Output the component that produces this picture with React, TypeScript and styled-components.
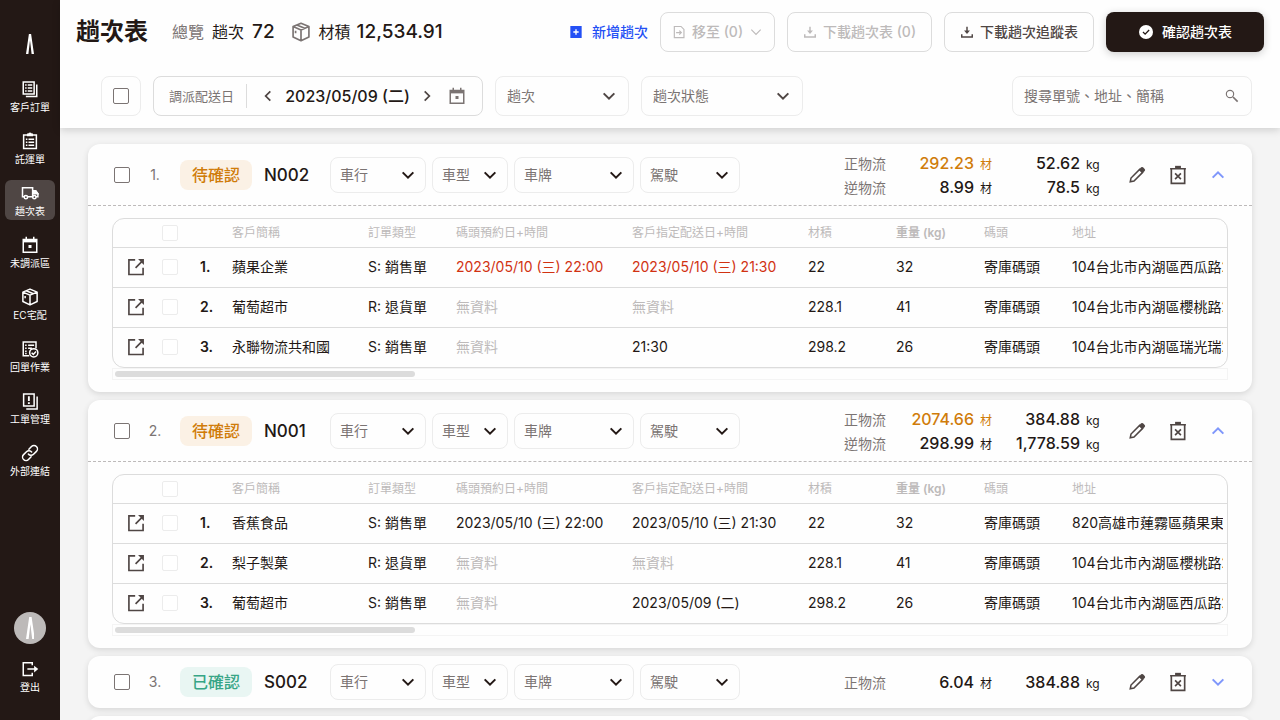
import React from "react";
import styled, { createGlobalStyle, css } from "styled-components";

const c = {
  ink: "#231815",
  soft: "#4f4644",
  grey: "#7b7473",
  light: "#bdbaba",
  line: "#dcdcdc",
  faint: "#ececec",
  blue: "#2450f5",
  amber: "#d07c0a",
  red: "#d13212",
};

const Global = createGlobalStyle`
  *, *::before, *::after { box-sizing: border-box; }
  body {
    margin: 0;
    background: #f4f4f4;
    color: ${c.ink};
    font-family: Inter, "Noto Sans CJK TC", sans-serif;
    font-size: 14px;
    line-height: 20px;
  }
  button, input, select { font: inherit; color: inherit; margin: 0; }
  button { padding: 0; border: 0; background: none; cursor: pointer; }
  svg { display: block; flex: none; }
`;

/* ---------- icons ---------- */

const Svg = styled.svg.attrs({ viewBox: "0 0 24 24", fill: "none", stroke: "currentColor", "aria-hidden": true })<{ $size?: number; $weight?: number }>`
  width: ${(p) => p.$size ?? 18}px;
  height: ${(p) => p.$size ?? 18}px;
  stroke-width: ${(p) => p.$weight ?? 2};
`;

const LogoMark = styled.svg.attrs({ viewBox: "0 0 8 20", fill: "currentColor", "aria-hidden": true })<{ $h: number }>`
  height: ${(p) => p.$h}px;
  width: ${(p) => p.$h * 0.4}px;
`;
const Logo = ({ h }: { h: number }) => (
  <LogoMark $h={h}>
    <path d="M2.900 0h2.200L8 20H5.600L4 6.500 2.400 20H0z" />
  </LogoMark>
);

const OrdersIcon = () => (
  <Svg>
    <path d="M3 2.500h14.500v16H3zM21 6v16H6.500" />
    <path d="M5.500 6.500h2M9 6.500h6M5.500 10.500h2M9 10.500h6M5.500 14.500h2M9 14.500h6" />
  </Svg>
);
const ClipboardIcon = () => (
  <Svg>
    <path d="M3.500 4h17v18h-17z" />
    <path d="M9 4.500V3h1.500a1.500 1.500 0 0 1 3 0H15v1.500z" fill="currentColor" />
    <path d="M6.500 9.500h2M10 9.500h7.500M6.500 13.500h2M10 13.500h7.500M6.500 17.500h2M10 17.500h7.500" />
  </Svg>
);
const TruckIcon = () => (
  <Svg>
    <path d="M4.500 17H2V5h13.500v12H9M15.500 9h4L22.500 13v4H20" />
    <path d="M16 9h3.500l3 4H16z" fill="currentColor" />
    <circle cx="6.500" cy="17.500" r="2.200" />
    <circle cx="17.800" cy="17.500" r="2.200" />
  </Svg>
);
const CalendarIcon = () => (
  <Svg>
    <path d="M3 4.500h18V21.500H3z" />
    <path d="M3 4.500h18v4H3z" fill="currentColor" stroke="none" />
    <path d="M7 1v3M17 1v3" />
    <path d="M10 12h4v4h-4z" fill="currentColor" stroke="none" />
  </Svg>
);
const BoxIcon = ({ size, weight }: { size?: number; weight?: number }) => (
  <Svg $size={size} $weight={weight} strokeLinejoin="round">
    <path d="M12 1.500 21.500 5.500v12.500L12 22.500 2.500 18V5.500zM2.500 5.500 12 9.500l9.500-4M12 9.500v13M7 3.600l9.500 4" />
    <path d="M5.500 10.500v3" />
  </Svg>
);
const ReceiptIcon = () => (
  <Svg>
    <path d="M20 11V2.500H3V21h8" />
    <path d="M5.500 7h2M9.500 7h8M5.500 11h2M9.500 11h5M5.500 15h2M5.500 18h2" />
    <circle cx="17" cy="17" r="5.500" />
    <path d="m14.200 17 2.200 2.200 3.600-4" />
  </Svg>
);
const IssueIcon = () => (
  <Svg>
    <path d="M3.500 2.500h14v16h-14zM21.500 6v16.500H7" />
    <path d="M10.500 5.500V12M10.500 13.500v2.500" strokeWidth="2.500" />
  </Svg>
);
const LinkIcon = () => (
  <Svg strokeLinecap="round">
    <path d="m10.500 7 3.500-3.700a4.600 4.600 0 0 1 6.600 6.500l-3.900 4a4.600 4.600 0 0 1-6.900-.5" />
    <path d="m13.500 17-3.500 3.700a4.600 4.600 0 0 1-6.600-6.500l3.900-4a4.600 4.600 0 0 1 6.900.5" />
  </Svg>
);
const LogoutIcon = () => (
  <Svg>
    <path d="M15 7V3.500H3v17h12V17M8.500 12H19" />
    <path d="M17.500 7.500 23 12l-5.500 4.500z" fill="currentColor" stroke="none" />
  </Svg>
);
const PlusSquare = () => (
  <Svg $size={16}>
    <path d="M3.500 3h17v18h-17z" fill="currentColor" stroke="none" />
    <path d="M12 8v8M8 12h8" stroke="#fff" />
  </Svg>
);
const MoveIcon = () => (
  <Svg $size={14}>
    <path d="M4 2.500h11.500L20.500 7.500v14H4zM7 13h8.500M12.500 9.500 16 13l-3.500 3.500" />
  </Svg>
);
const DownloadIcon = () => (
  <Svg $size={14}>
    <path d="M3 16v4.500h18V16M12 3v9" strokeWidth="2.500" />
    <path d="M7 9.500h10L12 15.500z" fill="currentColor" stroke="none" />
  </Svg>
);
const CheckCircle = () => (
  <Svg $size={16}>
    <circle cx="12" cy="12" r="10.500" fill="#fff" stroke="none" />
    <path d="m7.500 12 3.200 3.200 6-6.200" stroke={c.ink} />
  </Svg>
);
const SearchIcon = () => (
  <Svg $size={16}>
    <circle cx="9" cy="9" r="5.500" strokeWidth="1.700" />
    <path d="m13.500 13.500 7 7" strokeWidth="2.500" />
  </Svg>
);
const Chevron = ({ dir, size = 16, weight = 3 }: { dir: "up" | "down" | "left" | "right"; size?: number; weight?: number }) => {
  const d = { up: "m4 16 8-8 8 8", down: "m4 8 8 8 8-8", left: "m16 4-8 8 8 8", right: "m8 4 8 8-8 8" }[dir];
  return (
    <Svg $size={size} $weight={weight}>
      <path d={d} />
    </Svg>
  );
};
const PencilIcon = () => (
  <Svg>
    <path d="m3 21 1-5L15.500 4.500l4 4L8 20z" />
    <path d="m14.500 5 3-3.200a2 2 0 0 1 2.500 0l2.300 2.300a2 2 0 0 1 0 2.500L19 9.500z" fill="currentColor" stroke="none" />
  </Svg>
);
const TrashIcon = () => (
  <Svg $size={20}>
    <path d="M4 4.500h16v17.500H4zM2.500 4.500h19M8.500 10l7 7M15.500 10l-7 7" />
    <path d="M8.500 1h7v3h-7z" fill="currentColor" stroke="none" />
  </Svg>
);
const OpenIcon = () => (
  <Svg $size={20}>
    <path d="M11 3.500H3.500v17.500h17V13M11.500 13l8-8" />
    <path d="M14.500 2.500h7v7z" fill="currentColor" stroke="none" />
  </Svg>
);

/* ---------- shell ---------- */

const Shell = styled.div`
  display: flex;
  height: 100vh;
`;
const Sidebar = styled.aside`
  display: flex;
  flex-direction: column;
  align-items: center;
  flex: none;
  width: 60px;
  padding: 34px 0 24px;
  background: ${c.ink};
  color: #fff;
`;
const Nav = styled.nav`
  display: flex;
  flex-direction: column;
  gap: 12px;
  margin-top: 22px;
`;
const navItem = css`
  display: flex;
  flex-direction: column;
  align-items: center;
  justify-content: flex-end;
  gap: 2px;
  width: 50px;
  height: 40px;
  padding-bottom: 2px;
  border-radius: 6px;
  color: #fff;
  font-size: 10px;
  line-height: 14px;
  white-space: nowrap;
  text-decoration: none;
`;
const NavLink = styled.a<{ $active?: boolean }>`
  ${navItem}
  background: ${(p) => (p.$active ? "#4f4644" : "transparent")};
`;
const LogoutButton = styled.button`
  ${navItem}
`;
const Avatar = styled.div`
  display: flex;
  align-items: center;
  justify-content: center;
  width: 32px;
  height: 32px;
  margin: auto 0 12px;
  border-radius: 50%;
  background: #bdbab9;
`;
const Main = styled.main`
  display: flex;
  flex-direction: column;
  flex: 1;
  min-width: 0;
`;

/* ---------- header ---------- */

const Header = styled.header`
  position: relative;
  z-index: 1;
  flex: none;
  background: #fefefe;
  box-shadow: 0 2px 8px rgba(0, 0, 0, 0.16);
`;
const TopBar = styled.div`
  display: flex;
  align-items: center;
  justify-content: space-between;
  height: 64px;
  padding: 0 16px;
`;
const Summary = styled.div`
  display: flex;
  align-items: center;
  gap: 24px;
  font-size: 16px;
  line-height: 24px;
  white-space: nowrap;
`;
const Title = styled.h1`
  margin: 0;
  font-size: 24px;
  font-weight: 600;
  line-height: 32px;
`;
const Stats = styled.div`
  display: flex;
  align-items: center;
  gap: 16px;
`;
const Stat = styled.div<{ $gap: number }>`
  display: flex;
  align-items: center;
  gap: ${(p) => p.$gap}px;
`;
const Muted = styled.span`
  display: flex;
  color: ${c.grey};
`;
const Total = styled.strong`
  font-size: 19px;
  font-weight: 500;
`;
const Actions = styled.div`
  display: flex;
  align-items: center;
  gap: 12px;
  font-weight: 500;
`;
const Button = styled.button<{ $kind?: "link" | "solid"; $w?: number }>`
  display: flex;
  align-items: center;
  justify-content: center;
  gap: ${(p) => (p.$kind ? 8 : 6)}px;
  height: 40px;
  width: ${(p) => (p.$w ? `${p.$w}px` : "auto")};
  font-weight: 500;
  white-space: nowrap;
  border: 1px solid ${c.line};
  border-radius: 8px;
  color: ${c.soft};
  &:disabled { color: ${c.light}; }
  ${(p) => p.$kind === "link" && css`border: 0; color: ${c.blue};`}
  ${(p) => p.$kind === "solid" && css`
    border: 0;
    background: ${c.ink};
    color: #fff;
    box-shadow: 0 2px 8px rgba(0, 0, 0, 0.2);
  `}
`;
const FilterBar = styled.div`
  display: flex;
  align-items: center;
  gap: 12px;
  height: 64px;
  padding: 0 28px 0 41px;
`;
const Check = styled.input.attrs({ type: "checkbox" })<{ $pale?: boolean }>`
  appearance: none;
  display: block;
  flex: none;
  width: 16px;
  height: 16px;
  border: 1px solid ${(p) => (p.$pale ? c.faint : c.grey)};
  border-radius: 2px;
  background: #fff;
  &:checked { background: ${c.blue}; }
`;
const CheckFrame = styled.label`
  display: flex;
  align-items: center;
  justify-content: center;
  width: 40px;
  height: 40px;
  border: 1px solid ${c.faint};
  border-radius: 8px;
`;
const DateBox = styled.div`
  display: flex;
  align-items: center;
  justify-content: space-between;
  width: 330px;
  height: 40px;
  padding: 0 16px 0 15px;
  border: 1px solid ${c.line};
  border-radius: 8px;
  white-space: nowrap;
`;
const DateLabel = styled.span`
  padding-right: 12px;
  border-right: 1px solid ${c.line};
  color: ${c.grey};
  font-size: 13px;
  line-height: 24px;
`;
const Stepper = styled.div`
  display: flex;
  align-items: center;
  gap: 10px;
`;
const DateValue = styled.span`
  font-size: 16px;
  font-weight: 500;
`;
const IconButton = styled.button<{ $tone?: string }>`
  display: flex;
  align-items: center;
  justify-content: center;
  color: ${(p) => p.$tone ?? c.soft};
`;
const SelectFrame = styled.div<{ $w: number; $tall?: boolean }>`
  display: grid;
  align-items: center;
  flex: none;
  width: ${(p) => p.$w}px;
  height: ${(p) => (p.$tall ? 40 : 36)}px;
  color: ${(p) => (p.$tall ? c.soft : c.ink)};
  & > * { grid-area: 1 / 1; }
  & > svg {
    justify-self: end;
    margin-right: ${(p) => (p.$tall ? 12 : 10)}px;
    pointer-events: none;
  }
`;
const SelectControl = styled.select<{ $tall?: boolean }>`
  appearance: none;
  width: 100%;
  height: 100%;
  padding: 0 28px 0 ${(p) => (p.$tall ? 11 : 9)}px;
  border: 1px solid ${c.faint};
  border-radius: 8px;
  background: transparent;
  color: ${c.grey};
`;
const Select = ({ label, w, tall }: { label: string; w: number; tall?: boolean }) => (
  <SelectFrame $w={w} $tall={tall}>
    <SelectControl aria-label={label} $tall={tall}>
      <option>{label}</option>
    </SelectControl>
    <Chevron dir="down" />
  </SelectFrame>
);
const Search = styled.label`
  display: flex;
  align-items: center;
  width: 240px;
  height: 40px;
  margin-left: auto;
  padding: 0 11px;
  border: 1px solid ${c.faint};
  border-radius: 8px;
  color: ${c.grey};
`;
const SearchInput = styled.input`
  flex: 1;
  min-width: 0;
  padding: 0;
  border: 0;
  outline: 0;
  background: none;
  &::placeholder { color: ${c.grey}; opacity: 1; }
`;

/* ---------- trip cards ---------- */

const List = styled.div`
  display: flex;
  flex-direction: column;
  gap: 8px;
  flex: 1;
  min-height: 0;
  padding: 16px 28px 0;
  overflow: hidden auto;
  scrollbar-width: none;
`;
const Card = styled.section`
  flex: none;
  min-height: 52px;
  border-radius: 12px;
  background: #fefefe;
  box-shadow: 0 2px 6px rgba(0, 0, 0, 0.12);
`;
const CardHead = styled.div<{ $open: boolean }>`
  display: flex;
  align-items: center;
  height: ${(p) => (p.$open ? 62 : 52)}px;
  padding: 0 26px;
  border-bottom: ${(p) => (p.$open ? `1px dashed ${c.light}` : "0")};
`;
const Index = styled.span`
  width: 50px;
  text-align: center;
  color: ${c.grey};
`;
const Badge = styled.span<{ $done?: boolean }>`
  flex: none;
  width: 72px;
  border-radius: 8px;
  background: ${(p) => (p.$done ? "#e9f6f3" : "#fbf1e5")};
  color: ${(p) => (p.$done ? "#37a586" : c.amber)};
  font-size: 16px;
  font-weight: 500;
  line-height: 30px;
  text-align: center;
`;
const TripName = styled.h2`
  width: 66px;
  margin: 0 0 0 12px;
  font-size: 17px;
  font-weight: 500;
  line-height: 24px;
`;
const Selects = styled.div`
  display: flex;
  gap: 6px;
`;
const Flows = styled.dl`
  display: grid;
  gap: 0;
  margin: 0 0 0 auto;
`;
const Flow = styled.div`
  display: grid;
  grid-template-columns: 42px 82px 12px 82px 14px;
  column-gap: 6px;
  align-items: baseline;
  height: 24px;
  line-height: 24px;
`;
const FlowLabel = styled.dt`
  color: ${c.grey};
  white-space: nowrap;
`;
const Amount = styled.dd<{ $warn?: boolean }>`
  margin: 0;
  text-align: right;
  font-size: 16px;
  font-weight: 500;
  color: ${(p) => (p.$warn ? c.amber : c.ink)};
`;
const Unit = styled.dd<{ $warn?: boolean }>`
  margin: 0;
  font-size: 12px;
  color: ${(p) => (p.$warn ? c.amber : c.ink)};
`;
const Tools = styled.div`
  display: flex;
  align-items: center;
  gap: 22px;
  margin-left: 28px;
`;
const Body = styled.div`
  padding: 12px 24px;
`;
const TableFrame = styled.div`
  overflow: hidden;
  border: 1px solid ${c.line};
  border-radius: 12px;
`;
const Table = styled.table`
  width: 100%;
  table-layout: fixed;
  border-collapse: collapse;
  text-align: left;
`;
const Col = styled.col<{ $w?: number }>`
  width: ${(p) => (p.$w ? `${p.$w}px` : "auto")};
`;
const Th = styled.th<{ $strong?: boolean }>`
  height: 28px;
  padding: 0;
  color: ${c.light};
  font-size: 12px;
  font-weight: ${(p) => (p.$strong ? 600 : 400)};
  line-height: 16px;
  white-space: nowrap;
`;
const Td = styled.td<{ $tone?: "red" | "light"; $strong?: boolean }>`
  height: 40px;
  padding: 0;
  border-top: 1px solid ${c.line};
  color: ${(p) => (p.$tone ? c[p.$tone] : c.ink)};
  font-weight: ${(p) => (p.$strong ? 600 : 400)};
  white-space: nowrap;
`;
const OpenCell = styled(Td)`
  padding-left: 13px;
`;
const Clip = styled.div`
  margin-right: 4px;
  overflow: hidden;
`;
const ScrollTrack = styled.div`
  height: 12px;
  padding: 2px;
  border: 1px solid #f4f4f4;
`;
const ScrollThumb = styled.div`
  width: 300px;
  height: 6px;
  border-radius: 3px;
  background: #dcdcdc;
`;

type Row = [name: string, type: string, dock: string, deliver: string, volume: string, weight: string, address: string];
type FlowData = [label: string, volume: string, weight: string, warn?: boolean];
interface Trip {
  name: string;
  done?: boolean;
  flows: FlowData[];
  late?: boolean;
  rows?: Row[];
}

const NONE = "無資料";
const trips: Trip[] = [
  {
    name: "N002",
    flows: [["正物流", "292.23", "52.62", true], ["逆物流", "8.99", "78.5"]],
    late: true,
    rows: [
      ["蘋果企業", "S: 銷售單", "2023/05/10 (三) 22:00", "2023/05/10 (三) 21:30", "22", "32", "104台北市內湖區西瓜路2"],
      ["葡萄超市", "R: 退貨單", NONE, NONE, "228.1", "41", "104台北市內湖區櫻桃路2"],
      ["永聯物流共和國", "S: 銷售單", NONE, "21:30", "298.2", "26", "104台北市內湖區瑞光瑞2"],
    ],
  },
  {
    name: "N001",
    flows: [["正物流", "2074.66", "384.88", true], ["逆物流", "298.99", "1,778.59"]],
    rows: [
      ["香蕉食品", "S: 銷售單", "2023/05/10 (三) 22:00", "2023/05/10 (三) 21:30", "22", "32", "820高雄市蓮霧區蘋果東"],
      ["梨子製菓", "R: 退貨單", NONE, NONE, "228.1", "41", "104台北市內湖區櫻桃路2"],
      ["葡萄超市", "S: 銷售單", NONE, "2023/05/09 (二)", "298.2", "26", "104台北市內湖區西瓜路2"],
    ],
  },
  { name: "S002", done: true, flows: [["正物流", "6.04", "384.88"]] },
];

const widths = [49, 38, 32, 136, 88, 176, 176, 88, 88, 88, undefined];
const headings = ["客戶簡稱", "訂單類型", "碼頭預約日+時間", "客戶指定配送日+時間", "材積", "重量 (kg)", "碼頭", "地址"];

const Orders = ({ rows, late }: { rows: Row[]; late?: boolean }) => {
  const tone = (text: string, hot: boolean) => (text === NONE ? "light" : hot ? "red" : undefined);
  return (
    <Body>
      <TableFrame>
        <Table>
          <colgroup>{widths.map((w, i) => <Col key={i} $w={w} />)}</colgroup>
          <thead>
            <tr>
              <Th />
              <Th><Check $pale aria-label="全選" /></Th>
              <Th />
              {headings.map((h) => <Th key={h} scope="col" $strong={h.startsWith("重量")}>{h}</Th>)}
            </tr>
          </thead>
          <tbody>
            {rows.map(([name, type, dock, deliver, volume, weight, address], i) => (
              <tr key={i}>
                <OpenCell><IconButton aria-label="開啟"><OpenIcon /></IconButton></OpenCell>
                <Td><Check $pale aria-label={name} /></Td>
                <Td $strong>{i + 1}.</Td>
                <Td>{name}</Td>
                <Td>{type}</Td>
                <Td $tone={tone(dock, !!late && i === 0)}>{dock}</Td>
                <Td $tone={tone(deliver, !!late && i === 0)}>{deliver}</Td>
                <Td>{volume}</Td>
                <Td>{weight}</Td>
                <Td>寄庫碼頭</Td>
                <Td><Clip>{address}</Clip></Td>
              </tr>
            ))}
          </tbody>
        </Table>
      </TableFrame>
      <ScrollTrack><ScrollThumb /></ScrollTrack>
    </Body>
  );
};

const TripCard = ({ trip, index }: { trip: Trip; index: number }) => (
  <Card>
    <CardHead $open={!!trip.rows}>
      <Check aria-label={trip.name} />
      <Index>{index}.</Index>
      <Badge $done={trip.done}>{trip.done ? "已確認" : "待確認"}</Badge>
      <TripName>{trip.name}</TripName>
      <Selects>
        <Select label="車行" w={96} />
        <Select label="車型" w={76} />
        <Select label="車牌" w={120} />
        <Select label="駕駛" w={100} />
      </Selects>
      <Flows>
        {trip.flows.map(([label, volume, weight, warn]) => (
          <Flow key={label}>
            <FlowLabel>{label}</FlowLabel>
            <Amount $warn={warn}>{volume}</Amount>
            <Unit $warn={warn}>材</Unit>
            <Amount>{weight}</Amount>
            <Unit>kg</Unit>
          </Flow>
        ))}
      </Flows>
      <Tools>
        <IconButton aria-label="編輯"><PencilIcon /></IconButton>
        <IconButton aria-label="刪除"><TrashIcon /></IconButton>
        <IconButton aria-label="展開" $tone="#7f97fb"><Chevron dir={trip.rows ? "up" : "down"} /></IconButton>
      </Tools>
    </CardHead>
    {trip.rows && <Orders rows={trip.rows} late={trip.late} />}
  </Card>
);

const navItems: [string, React.ReactNode][] = [
  ["客戶訂單", <OrdersIcon />],
  ["託運單", <ClipboardIcon />],
  ["趟次表", <TruckIcon />],
  ["未調派區", <CalendarIcon />],
  ["EC宅配", <BoxIcon />],
  ["回單作業", <ReceiptIcon />],
  ["工單管理", <IssueIcon />],
  ["外部連結", <LinkIcon />],
];

export default function App() {
  return (
    <Shell>
      <Global />
      <Sidebar>
        <Logo h={20} />
        <Nav>
          {navItems.map(([label, icon]) => (
            <NavLink key={label} href="#" $active={label === "趟次表"}>{icon}{label}</NavLink>
          ))}
        </Nav>
        <Avatar><Logo h={22} /></Avatar>
        <LogoutButton><LogoutIcon />登出</LogoutButton>
      </Sidebar>
      <Main>
        <Header>
          <TopBar>
            <Summary>
              <Title>趟次表</Title>
              <Stats>
                <Stat $gap={8}>
                  <Muted>總覽</Muted>
                  <span>趟次</span>
                  <Total>72</Total>
                </Stat>
                <Stat $gap={8}>
                  <Muted><BoxIcon size={20} weight={2} /></Muted>
                  <Stat $gap={6}>
                    <span>材積</span>
                    <Total>12,534.91</Total>
                  </Stat>
                </Stat>
              </Stats>
            </Summary>
            <Actions>
              <Button $kind="link"><PlusSquare />新增趟次</Button>
              <Button disabled $w={115}><MoveIcon />移至 (0)<Chevron dir="down" size={14} weight={2} /></Button>
              <Button disabled $w={145}><DownloadIcon />下載趟次表 (0)</Button>
              <Button $w={150}><DownloadIcon />下載趟次追蹤表</Button>
              <Button $kind="solid" $w={158}><CheckCircle />確認趟次表</Button>
            </Actions>
          </TopBar>
          <FilterBar>
            <CheckFrame><Check aria-label="全選" /></CheckFrame>
            <DateBox>
              <DateLabel>調派配送日</DateLabel>
              <Stepper>
                <IconButton aria-label="前一天"><Chevron dir="left" size={14} /></IconButton>
                <DateValue>2023/05/09 (二)</DateValue>
                <IconButton aria-label="後一天"><Chevron dir="right" size={14} /></IconButton>
              </Stepper>
              <IconButton aria-label="選擇日期" $tone={c.grey}><CalendarIcon /></IconButton>
            </DateBox>
            <Select label="趟次" w={134} tall />
            <Select label="趟次狀態" w={162} tall />
            <Search>
              <SearchInput aria-label="搜尋" placeholder="搜尋單號、地址、簡稱" />
              <SearchIcon />
            </Search>
          </FilterBar>
        </Header>
        <List>
          {trips.map((trip, i) => <TripCard key={trip.name} trip={trip} index={i + 1} />)}
          <Card />
        </List>
      </Main>
    </Shell>
  );
}
